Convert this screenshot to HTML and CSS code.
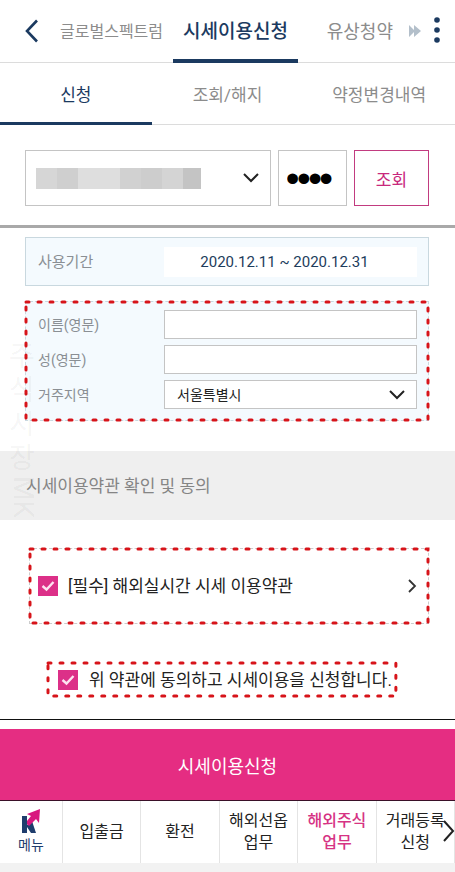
FILE: index.html
```html
<!DOCTYPE html>
<html lang="ko">
<head>
    <meta charset="UTF-8">
    <meta name="viewport" content="width=device-width, initial-scale=1.0">
    <title>시세이용신청</title>
    <link rel="stylesheet" href="styles.css">
</head>
<body>
    <header class="topbar">
        <button type="button" class="icon-button back" aria-label="이전">
            <svg width="14" height="24" viewBox="0 0 14 24"><path d="M12 1.5L2 12l10 10.5" fill="none" stroke="#1b3a60" stroke-width="2.6"/></svg>
        </button>
        <nav class="topnav">
            <a href="#" class="small">글로벌스펙트럼</a>
            <a href="#" class="active">시세이용신청</a>
            <a href="#" class="last">유상청약</a>
        </nav>
        <button type="button" class="icon-button forward" aria-label="다음 메뉴">
            <svg width="12" height="12" viewBox="0 0 12 12"><path d="M0 0l6 6-6 6zM5 0l7 6-7 6z" fill="#b3bfca"/></svg>
        </button>
        <button type="button" class="icon-button more" aria-label="더보기">
            <svg width="6" height="28" viewBox="0 0 6 28"><g fill="#1b3a60"><circle cx="3" cy="3" r="2.8"/><circle cx="3" cy="13" r="2.8"/><circle cx="3" cy="23" r="2.8"/></g></svg>
        </button>
    </header>

    <nav class="subtabs">
        <a href="#" class="active">신청</a>
        <a href="#">조회/해지</a>
        <a href="#">약정변경내역</a>
    </nav>

    <form>
        <div class="account-row">
            <div class="select-wrap account">
                <select class="account-select" aria-label="계좌번호">
                    <option></option>
                </select>
                <svg class="chevron" width="16" height="10" viewBox="0 0 16 10"><path d="M1 1l7 7 7-7" fill="none" stroke="#222" stroke-width="2"/></svg>
            </div>
            <input type="password" class="pin" value="0000" aria-label="비밀번호">
            <button type="button" class="search">조회</button>
        </div>

        <main>
            <div class="panel period">
                <span class="label">사용기간</span>
                <output class="period-value">2020.12.11 ~ 2020.12.31</output>
            </div>

            <div class="panel info outlined">
                <svg class="outline"><rect width="100%" height="100%"/></svg>
                <label for="first-name" class="label">이름(영문)</label>
                <input type="text" id="first-name" class="field">
                <label for="last-name" class="label">성(영문)</label>
                <input type="text" id="last-name" class="field">
                <label for="region" class="label">거주지역</label>
                <div class="select-wrap">
                    <select id="region" class="field">
                        <option>서울특별시</option>
                    </select>
                    <svg class="chevron" width="16" height="10" viewBox="0 0 16 10"><path d="M1 1l7 7 7-7" fill="none" stroke="#222" stroke-width="2"/></svg>
                </div>
            </div>

            <h2 class="section-title">시세이용약관 확인 및 동의</h2>

            <div class="terms outlined">
                <svg class="outline"><rect width="100%" height="100%"/></svg>
                <input type="checkbox" id="terms" class="check" checked>
                <label for="terms">[필수] 해외실시간 시세 이용약관</label>
                <button type="button" class="icon-button detail" aria-label="약관 보기">
                    <svg width="9" height="14" viewBox="0 0 9 14"><path d="M1 1l6 6-6 6" fill="none" stroke="#333" stroke-width="1.8"/></svg>
                </button>
            </div>

            <div class="agree outlined">
                <svg class="outline"><rect width="100%" height="100%"/></svg>
                <input type="checkbox" id="agree" class="check" checked>
                <label for="agree">위 약관에 동의하고 시세이용을 신청합니다.</label>
            </div>

            <div class="watermark" aria-hidden="true">주식시장<span class="sideways">MK</span></div>
        </main>

        <div class="submit-bar">
            <button type="submit" class="submit">시세이용신청</button>
        </div>
    </form>

    <nav class="bottom-nav">
        <a href="#" class="menu">
            <svg width="20" height="26" viewBox="0 0 20 26">
                <path d="M1 7h5v17H1zM6 16l5-4 4 12h-5l-4-6z" fill="#1f3d6d"/>
                <path d="M19 0l-1 14-3-4-7 7-2-2v-3l4-5-4-2z" fill="#d8177f"/>
            </svg>
            <span>메뉴</span>
        </a>
        <a href="#">입출금</a>
        <a href="#">환전</a>
        <a href="#">해외선옵<br>업무</a>
        <a href="#" class="active">해외주식<br>업무</a>
        <a href="#">거래등록<br>신청</a>
        <button type="button" class="icon-button scroll-next" aria-label="다음">
            <svg width="12" height="22" viewBox="0 0 12 22"><path d="M1 1l9 10-9 10" fill="none" stroke="#222" stroke-width="2"/></svg>
        </button>
    </nav>
</body>
</html>
```

FILE: styles.css
```css
* {
    box-sizing: border-box;
}

body {
    margin: 0;
    font-family: Roboto, "Noto Sans CJK KR", sans-serif;
    font-size: 17px;
    line-height: 24px;
    color: #222;
    background: #fff;
}

a {
    color: inherit;
    text-decoration: none;
}

button,
input,
select {
    margin: 0;
    font-family: inherit;
    border-radius: 0;
}

svg {
    display: block;
}

.icon-button {
    display: flex;
    align-items: center;
    justify-content: center;
    padding: 0;
    border: 0;
    background: none;
}

/* top navigation */
.topbar {
    display: flex;
    height: 63px;
    padding-right: 8px;
    border-bottom: 1px solid #dcdcdc;
}

.back {
    width: 50px;
    padding-left: 14px;
}

.topnav {
    display: flex;
    flex: 1;
}

.topnav a {
    display: flex;
    align-items: center;
    height: 63px;
    padding: 4px 10px 0;
    border-bottom: 4px solid transparent;
    font-size: 18px;
    color: #8c8c8c;
    white-space: nowrap;
}

.topnav .small {
    font-size: 16px;
}

.topnav .active {
    font-size: 19px;
    font-weight: 500;
    color: #1b3a60;
    border-bottom-color: #1b3a60;
}

.topnav .last {
    margin-left: auto;
}

.forward {
    width: 24px;
}

.more {
    width: 20px;
}

/* sub tabs */
.subtabs {
    display: grid;
    grid-template-columns: repeat(3, 1fr);
    border-bottom: 1px solid #dcdcdc;
    text-align: center;
    color: #8c8c8c;
}

.subtabs a {
    padding: 20px 0 15px;
    margin-bottom: -1px;
    border-bottom: 3px solid transparent;
}

.subtabs .active {
    color: #1b3a60;
    border-bottom-color: #1b3a60;
}

/* account search */
.account-row {
    display: flex;
    gap: 7px;
    padding: 25px 26px 19px 25px;
    border-bottom: 3px solid #a9a9a9;
}

.select-wrap {
    position: relative;
}

.select-wrap select {
    width: 100%;
    appearance: none;
}

.chevron {
    position: absolute;
    top: 50%;
    right: 12px;
    margin-top: -5px;
    pointer-events: none;
}

.account {
    flex: 1;
}

.account-select {
    height: 56px;
    border: 1px solid #c4c4c4;
    /* masked account number */
    background: linear-gradient(to right, #d6d6d6 21px, #cfcfcf 21px 42px, #dedede 42px 84px, #d1d1d1 84px 105px, #cdcdcd 105px 126px, #d4d4d4 126px 147px, #c4c4c4 147px) 10px center / 165px 21px no-repeat #fff;
}

.pin {
    width: 69px;
    height: 56px;
    padding: 0 8px;
    border: 1px solid #c4c4c4;
    font-family: "Liberation Sans", Arial, sans-serif;
    font-size: 32px;
    color: #000;
    -webkit-text-stroke: 2px #000;
}

.search {
    width: 75px;
    height: 56px;
    border: 1px solid #c23b80;
    background: #fff;
    font-size: 17px;
    color: #c8287c;
}

/* form panels */
main {
    position: relative;
    padding: 9px 0 23px;
}

.panel {
    display: grid;
    grid-template-columns: 126px 1fr;
    align-items: center;
    margin: 0 26px 0 25px;
    padding: 9px 11px 8px 12px;
    border: 1px solid #c9d8df;
    background: #f4fafe;
}

.label {
    font-size: 15px;
    color: #8a8f94;
}

.period-value {
    padding: 3px 12px 3px 0;
    background: #fff;
    font-size: 15px;
    text-align: center;
    color: #1d3c5c;
}

.info {
    row-gap: 6px;
    margin-top: 15px;
    padding-top: 8px;
    padding-bottom: 11px;
    border-style: dashed;
}

.info .label,
.info .field {
    font-size: 14px;
}

.field {
    display: block;
    width: 100%;
    height: 29px;
    padding: 0 12px;
    border: 1px solid #c4c4c4;
    background: #fff;
    color: #222;
}

/* red dotted outline around the required parts */
.outlined {
    position: relative;
}

.outline {
    position: absolute;
    top: 0;
    left: 0;
    width: 100%;
    height: 100%;
    overflow: visible;
    pointer-events: none;
}

.outline rect {
    fill: none;
    stroke: #d7141a;
    stroke-width: 3px;
    stroke-linecap: round;
    stroke-dasharray: 3px 9px;
}

.section-title {
    margin: 30px 0 0;
    padding: 23px 26px 22px;
    background: #efefef;
    font-size: 17px;
    font-weight: 400;
    color: #858585;
}

.terms {
    display: flex;
    align-items: center;
    gap: 10px;
    height: 76px;
    margin: 28px 26px 0 29px;
    padding: 0 8px;
    border: 1px dashed #ccc;
}

.check {
    flex: none;
    width: 20px;
    height: 20px;
    appearance: none;
    background: #dc3088 url("data:image/svg+xml,%3Csvg xmlns='http://www.w3.org/2000/svg' viewBox='0 0 20 20'%3E%3Cpath d='M4.5 10l4 3.500 7-7.500' fill='none' stroke='%23fde3f1' stroke-width='2.400'/%3E%3C/svg%3E");
}

.detail {
    width: 16px;
    height: 24px;
    margin-left: auto;
}

.agree {
    display: flex;
    align-items: center;
    gap: 11px;
    width: fit-content;
    height: 33px;
    margin: 39px 0 0 48px;
    padding: 0 4px 0 10px;
}

.watermark {
    position: absolute;
    top: 112px;
    left: 9px;
    width: 28px;
    font-size: 28px;
    line-height: 34px;
    word-break: break-all;
    color: rgba(0, 0, 0, 0.05);
    pointer-events: none;
}

.sideways {
    display: block;
    line-height: 28px;
    writing-mode: vertical-rl;
}

/* submit */
.submit-bar {
    padding-top: 9px;
    border-top: 1px solid #111;
    border-bottom: 1px solid #3a1028;
}

.submit {
    display: block;
    width: 100%;
    height: 71px;
    border: 0;
    background: #e52d82;
    font-size: 18px;
    color: #fff;
}

/* bottom navigation */
.bottom-nav {
    position: relative;
    display: grid;
    grid-template-columns: 63px repeat(5, 1fr);
    border-bottom: 9px solid #f2f2f2;
    font-size: 16px;
    line-height: 22px;
    text-align: center;
}

.bottom-nav a {
    display: flex;
    flex-direction: column;
    align-items: center;
    justify-content: center;
    height: 62px;
    border-right: 1px solid #e4e4e4;
    white-space: nowrap;
}

.bottom-nav .active {
    font-weight: 500;
    color: #d63384;
}

.bottom-nav .menu {
    font-size: 14px;
    line-height: 20px;
    color: #1f3d6d;
}

.scroll-next {
    position: absolute;
    top: 19px;
    right: 0;
}
```
